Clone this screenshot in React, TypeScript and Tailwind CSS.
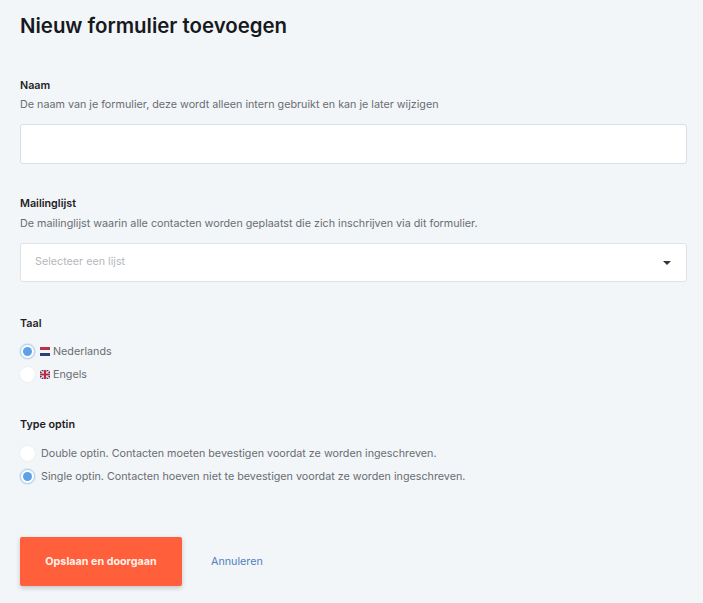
export default function App() {
  const font = { fontFamily: "Inter, sans-serif" };
  return (
    <div style={font} className="h-[603px] w-[703px] overflow-hidden bg-[#f3f6f8] pl-5 pr-4 pt-[12px]">
      <h1 className="text-[20.4px] font-semibold leading-[28px] text-[#16191d]">Nieuw formulier toevoegen</h1>

      <section className="mt-[36px]">
        <div className="text-[10.75px] font-semibold leading-[20px] text-[#1d2126]">Naam</div>
        <p className="text-[10.75px] leading-[18px] text-[#686d73]">De naam van je formulier, deze wordt alleen intern gebruikt en kan je later wijzigen</p>
        <div className="mt-[10px] h-10 w-full rounded-[3px] border border-[#d9dee3] bg-white" />
      </section>

      <section className="mt-[30px]">
        <div className="text-[10.75px] font-semibold leading-[20px] text-[#1d2126]">Mailinglijst</div>
        <p className="mt-px text-[10.75px] leading-[18px] text-[#686d73]">De mailinglijst waarin alle contacten worden geplaatst die zich inschrijven via dit formulier.</p>
        <div className="mt-[10px] flex h-[39px] w-full items-center justify-between rounded-[3px] border border-[#dfe3e7] bg-white pl-[14px] pr-[15px]">
          <span className="text-[10.75px] text-[#b4b8bd]">Selecteer een lijst</span>
          <span className="h-0 w-0 border-x-[4px] border-t-[4px] border-x-transparent border-t-[#33383d]" />
        </div>
      </section>

      <section className="mt-[32px]">
        <div className="text-[10.75px] font-semibold leading-[20px] text-[#1d2126]">Taal</div>
        <div className="mt-[6px] flex h-[23px] items-center text-[10.75px] text-[#686d73]">
          <Radio checked />
          <svg width="10" height="9" viewBox="0 0 10 9" className="ml-[5px] mr-[3px]">
            <rect width="10" height="3" fill="#b8323f" />
            <rect y="3" width="10" height="3" fill="#f5f5f5" />
            <rect y="6" width="10" height="3" fill="#27407f" />
          </svg>
          <span className="pt-px">Nederlands</span>
        </div>
        <div className="flex h-[23px] items-center text-[10.75px] text-[#686d73]">
          <Radio />
          <svg width="10" height="9" viewBox="0 0 10 9" className="ml-[5px] mr-[3px]">
            <rect width="10" height="9" fill="#2a3a78" />
            <path d="M0 0L10 9M10 0L0 9" stroke="#f2d5d8" strokeWidth="1.6" />
            <path d="M5 0V9M0 4.5H10" stroke="#f5f5f5" strokeWidth="3.2" />
            <path d="M5 0V9M0 4.5H10" stroke="#c3283a" strokeWidth="2" />
          </svg>
          <span className="pt-px">Engels</span>
        </div>
      </section>

      <section className="mt-[29px]">
        <div className="text-[10.75px] font-semibold leading-[20px] text-[#1d2126]">Type optin</div>
        <div className="mt-[7px] flex h-[23px] items-center text-[10.75px] text-[#686d73]">
          <Radio />
          <span className="ml-[6px] pt-px">Double optin. Contacten moeten bevestigen voordat ze worden ingeschreven.</span>
        </div>
        <div className="flex h-[23px] items-center text-[10.75px] text-[#686d73]">
          <Radio checked />
          <span className="ml-[6px] pt-px">Single optin. Contacten hoeven niet te bevestigen voordat ze worden ingeschreven.</span>
        </div>
      </section>

      <div className="mt-[49px] flex items-center">
        <button className="h-[49px] w-[162px] rounded-[2px] bg-[#ff5f3a] pt-px text-[10.75px] font-bold text-[#fff1ea] shadow-[0_2px_5px_rgba(0,0,0,0.2)]">
          Opslaan en doorgaan
        </button>
        <a className="ml-[29px] pt-px text-[10.75px] text-[#4f7fc0]">Annuleren</a>
      </div>
    </div>
  );
}

function Radio({ checked = false }: { checked?: boolean }) {
  return (
    <span className={"flex h-[15px] w-[15px] items-center justify-center rounded-full bg-white " + (checked ? "border border-[#a9cdf0] shadow-[0_0_0_1px_#dbe9f7]" : "shadow-[0_0_0_1px_#eceff2]")}>
      {checked ? <span className="h-[9px] w-[9px] rounded-full bg-[#5fa0e6]" /> : null}
    </span>
  );
}
